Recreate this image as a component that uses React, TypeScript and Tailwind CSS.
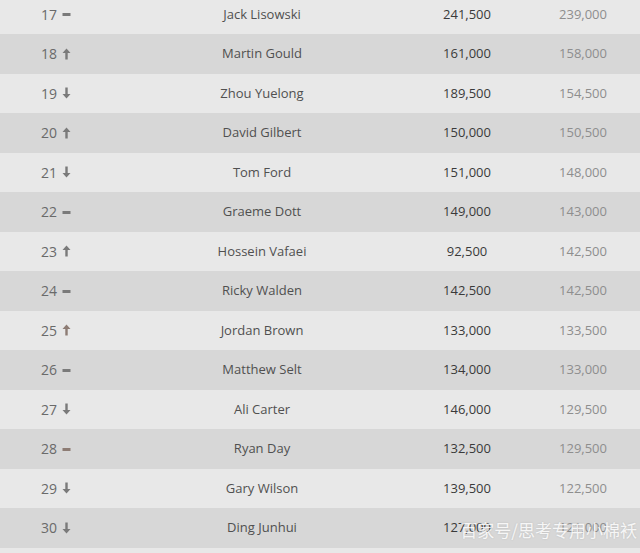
const ROWS: [number, "up" | "down" | "same", string, string, string, boolean?][] = [
  [17, "same", "Jack Lisowski", "241,500", "239,000"],
  [18, "up", "Martin Gould", "161,000", "158,000"],
  [19, "down", "Zhou Yuelong", "189,500", "154,500"],
  [20, "up", "David Gilbert", "150,000", "150,500"],
  [21, "down", "Tom Ford", "151,000", "148,000"],
  [22, "same", "Graeme Dott", "149,000", "143,000"],
  [23, "up", "Hossein Vafaei", "92,500", "142,500"],
  [24, "same", "Ricky Walden", "142,500", "142,500"],
  [25, "up", "Jordan Brown", "133,000", "133,500", true],
  [26, "same", "Matthew Selt", "134,000", "133,000"],
  [27, "down", "Ali Carter", "146,000", "129,500"],
  [28, "same", "Ryan Day", "132,500", "129,500", true],
  [29, "down", "Gary Wilson", "139,500", "122,500"],
  [30, "down", "Ding Junhui", "127,000", "121,000"],
];

function Move({ dir, warm }: { dir: "up" | "down" | "same"; warm?: boolean }) {
  const c = warm ? "#8d7c74" : "#7a7a7a";
  if (dir === "same") {
    return (
      <svg width="9" height="12" viewBox="0 0 9 12">
        <rect x="0.5" y="5" width="8" height="3" fill={c} />
      </svg>
    );
  }
  return (
    <svg width="9" height="12" viewBox="0 0 9 12" className={dir === "down" ? "rotate-180" : ""}>
      <path d="M4.5 0.5 L8.5 5 L5.7 5 L5.7 11.5 L3.3 11.5 L3.3 5 L0.5 5 Z" fill={c} />
    </svg>
  );
}

export default function App() {
  return (
    <div className="relative w-[640px] h-[553px] overflow-hidden bg-[#e8e8e8]" style={{ fontFamily: '"Open Sans", "Liberation Sans", sans-serif' }}>
      <div className="-mt-[5.5px] flex flex-col">
        {ROWS.map(([rank, dir, name, a, b, warm], i) => (
          <div key={rank} className={`grid grid-cols-[120px_284px_126px_110px] items-center h-[39.5px] text-[13px] ${i % 2 === 0 ? "bg-[#e8e8e8]" : "bg-[#d7d7d7]"}`}>
            <div className="flex items-center">
              <span className="w-[57px] text-right text-[#6a6a6a] text-[14px]">{rank}</span>
              <span className="ml-[5px] flex items-center"><Move dir={dir} warm={warm} /></span>
            </div>
            <div className="text-center text-[#505050]">{name}</div>
            <div className="text-center text-[#3a3a3a]">{a}</div>
            <div className="text-center text-[#8e8e8e] pr-[4px]">{b}</div>
          </div>
        ))}
        <div className="h-[40px] bg-[#e8e8e8]" />
      </div>
      <div className="absolute right-[3px] bottom-[11px] text-[17px] text-white/85 [text-shadow:0_0_2px_rgba(0,0,0,0.15)]" style={{ fontFamily: '"Noto Sans CJK SC", sans-serif' }}>
        百家号/思考专用小棉袄
      </div>
    </div>
  );
}
